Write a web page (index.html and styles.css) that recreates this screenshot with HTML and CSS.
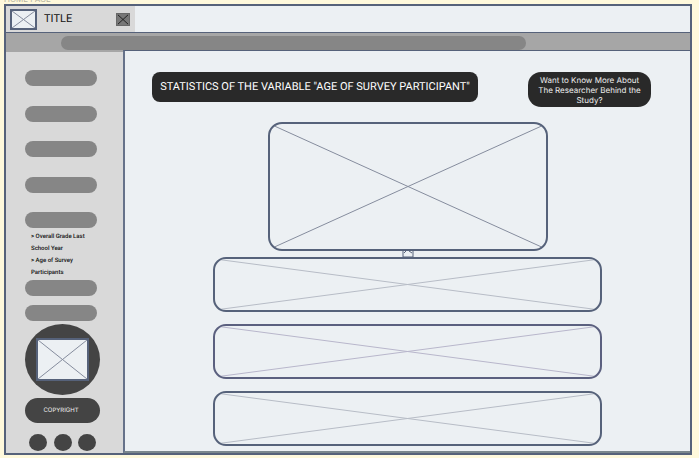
FILE: index.html
```html
<!DOCTYPE html>
<html lang="en">
<head>
<meta charset="utf-8">
<title>Home page</title>
<link rel="stylesheet" href="styles.css">
</head>
<body>
<p class="page-label">HOME PAGE</p>
<div class="frame">
  <header class="tabs">
    <div class="tab">
      <svg class="cross tab-logo" viewBox="0 0 100 100" preserveAspectRatio="none"><path d="M0 0L100 100M100 0L0 100"/></svg>
      <span class="tab-title">TITLE</span>
      <button class="close" aria-label="Close tab"><svg class="cross" viewBox="0 0 100 100" preserveAspectRatio="none"><path d="M8 8L92 92M92 8L8 92"/></svg></button>
    </div>
  </header>
  <div class="toolbar"><input class="address" aria-label="Address"></div>
  <div class="columns">
    <nav class="sidebar">
      <div class="menu">
        <button class="pill" aria-label="Menu 1"></button>
        <button class="pill" aria-label="Menu 2"></button>
        <button class="pill" aria-label="Menu 3"></button>
        <button class="pill" aria-label="Menu 4"></button>
        <button class="pill" aria-label="Menu 5"></button>
      </div>
      <div class="submenu">
        <a href="#grade">&gt; Overall Grade Last School Year</a>
        <a href="#age">&gt; Age of Survey Participants</a>
      </div>
      <div class="more">
        <button class="pill" aria-label="Menu 6"></button>
        <button class="pill" aria-label="Menu 7"></button>
      </div>
      <div class="emblem"><svg class="cross emblem-image" viewBox="0 0 100 100" preserveAspectRatio="none"><path d="M0 0L100 100M100 0L0 100"/></svg></div>
      <div class="copyright">COPYRIGHT</div>
      <div class="social">
        <a href="#one" aria-label="Social link 1"></a>
        <a href="#two" aria-label="Social link 2"></a>
        <a href="#three" aria-label="Social link 3"></a>
      </div>
    </nav>
    <main class="content">
      <div class="heading">
        <h1>STATISTICS OF THE VARIABLE "AGE OF SURVEY PARTICIPANT"</h1>
        <button class="researcher">Want to Know More About The Researcher Behind the Study?</button>
      </div>
      <div class="chart"><svg class="cross" viewBox="0 0 100 100" preserveAspectRatio="none"><path d="M0 0L100 100M100 0L0 100"/></svg></div>
      <svg class="connector" viewBox="0 0 12 8"><path d="M1 0V7H11V0M2 3L4 1M7 1L10 3"/></svg>
      <div class="rows">
        <div class="row"><svg class="cross" viewBox="0 0 100 100" preserveAspectRatio="none"><path d="M0 0L100 100M100 0L0 100"/></svg></div>
        <div class="row violet"><svg class="cross" viewBox="0 0 100 100" preserveAspectRatio="none"><path d="M0 0L100 100M100 0L0 100"/></svg></div>
        <div class="row"><svg class="cross" viewBox="0 0 100 100" preserveAspectRatio="none"><path d="M0 0L100 100M100 0L0 100"/></svg></div>
      </div>
    </main>
  </div>
</div>
</body>
</html>
```
FILE: styles.css
```css
* { box-sizing: border-box; }

body {
  margin: 0;
  min-height: 100vh;
  padding: 0 7px 3px 4px;
  display: flex;
  flex-direction: column;
  overflow: hidden;
  background: #fff9dc;
  font-family: Inter, "Liberation Sans", sans-serif;
  text-rendering: geometricPrecision;
  color: #111;
}

button, input { border: 0; padding: 0; font: inherit; text-rendering: inherit; }
a { color: inherit; text-decoration: none; }

.page-label {
  margin: -6px 0 0;
  height: 10px;
  font-size: 8px;
  line-height: 10px;
  color: #b5b39f;
}

.frame {
  flex: 1;
  display: flex;
  flex-direction: column;
  border: 2px solid #56627a;
  background: #ecf0f3;
}

.cross { display: block; width: 100%; height: 100%; }
.cross path {
  fill: none;
  stroke: #858c9d;
  stroke-width: 1px;
  vector-effect: non-scaling-stroke;
}

.tabs { height: 26px; }
.tab {
  width: 129px;
  height: 26px;
  padding: 0 5px 0 4px;
  display: flex;
  align-items: center;
  background: #d9d9d9;
}
.tab-logo {
  width: 27px;
  height: 21px;
  border: 2px solid #56627a;
  background: #ecf0f3;
}
.tab-title, .submenu, .heading h1 { font-family: Roboto, "Liberation Sans", sans-serif; }
.tab-title { margin-left: 7px; font-size: 11px; line-height: 12px; font-weight: 400; }
.close {
  width: 14px;
  height: 13px;
  margin-left: auto;
  border: 1px solid #686868;
  background: #777;
}
.close path { stroke: #222; }

.toolbar {
  height: 18px;
  padding: 3px 0 0 55px;
  border-top: 1px solid #56627a;
  background: #a6a6a6;
}
.address {
  display: block;
  width: 74%;
  height: 14px;
  border-radius: 7px;
  background: #868686;
}

.columns { flex: 1; display: flex; }
.sidebar {
  width: 117px;
  padding: 18px 0 2px 19px;
  border-top: 2px solid #a6a6a6;
  background: #d9d9d9;
}
.pill {
  display: block;
  width: 72px;
  height: 16px;
  border-radius: 8px;
  background: #868686;
}
.menu {
  height: 158px;
  display: flex;
  flex-direction: column;
  justify-content: space-between;
}
.submenu {
  width: 68px;
  margin: 3px 0 1px 6px;
  font-size: 6px;
  line-height: 12px;
  font-weight: 500;
}
.submenu a { display: block; }
.more { display: grid; gap: 9px; }
.emblem {
  width: 75px;
  height: 71px;
  margin: 3px 0;
  display: flex;
  align-items: center;
  justify-content: center;
  border-radius: 50%;
  background: #444;
}
.emblem-image {
  width: 53px;
  height: 43px;
  border: 2px solid #56627a;
  background: #ecf0f3;
}
.copyright {
  width: 75px;
  height: 25px;
  border-radius: 13px;
  background: #444;
  color: #eee;
  font-size: 6px;
  line-height: 25px;
  font-weight: 400;
  text-align: center;
  padding-right: 3px;
}
.social {
  width: 67px;
  margin: 11px 0 0 4px;
  display: flex;
  justify-content: space-between;
}
.social a { width: 18px; height: 17px; border-radius: 50%; background: #444; }

.content {
  flex: 1;
  display: flex;
  flex-direction: column;
  align-items: center;
  border-top: 1px solid #56627a;
  border-left: 2px solid #66728a;
  border-bottom: 2px solid #7b878d;
}
.heading {
  align-self: stretch;
  display: flex;
  align-items: flex-start;
  justify-content: space-between;
  margin: 21px 39px 15px 27px;
}
.heading h1 {
  width: 326px;
  margin: 0;
  border-radius: 8px;
  background: #292929;
  color: #fff;
  font-size: 11px;
  line-height: 30px;
  font-weight: 400;
  text-align: center;
  white-space: nowrap;
}
.researcher {
  width: 123px;
  height: 35px;
  padding: 0 8px;
  border-radius: 13px;
  background: #292929;
  color: #eee;
  font-size: 8px;
  line-height: 10px;
}
.chart, .row {
  overflow: hidden;
  border: 2px solid #56627a;
}
.chart { width: 280px; height: 129px; border-radius: 14px; }
.connector {
  width: 12px;
  height: 8px;
  margin: -1px 0;
  fill: none;
  stroke: #56627a;
}
.rows { width: 389px; display: grid; gap: 12px; }
.row { height: 55px; border-radius: 13px; }
.row path { stroke: #b7bcc6; }
.violet { border-color: #5b607f; }
.violet path { stroke: #b8b6cb; }
```
